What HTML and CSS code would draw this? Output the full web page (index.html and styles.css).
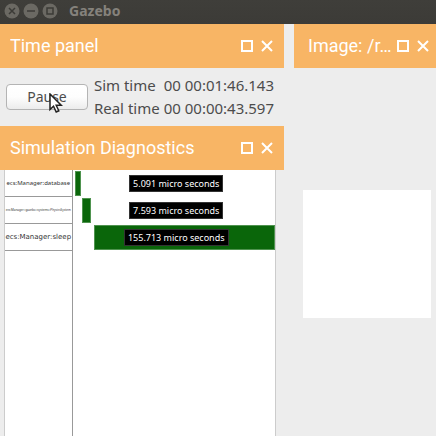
FILE: index.html
```html
<!DOCTYPE html>
<html lang="en">
<head>
<meta charset="utf-8">
<title>Gazebo</title>
<link rel="stylesheet" href="styles.css">
</head>
<body>
<header class="titlebar">
  <button class="window-button" aria-label="Close window"><svg viewBox="0 0 16 16"><circle cx="8" cy="8" r="7.5"/><path d="M5 5l6 6M11 5l-6 6"/></svg></button>
  <button class="window-button" aria-label="Minimize window"><svg viewBox="0 0 16 16"><circle cx="8" cy="8" r="7.5"/><path d="M4 8h8"/></svg></button>
  <button class="window-button" aria-label="Maximize window"><svg viewBox="0 0 16 16"><circle cx="8" cy="8" r="7.5"/><path d="M5 5h6v6H5z"/></svg></button>
  <h1 class="window-title">Gazebo</h1>
</header>
<main class="workspace">
  <div class="column">
    <section class="panel">
      <header class="panel-header">
        <h2 class="panel-title">Time panel</h2>
        <button class="panel-button" aria-label="Maximize"><svg viewBox="0 0 12 12"><path d="M1 1h10v10H1z"/></svg></button>
        <button class="panel-button" aria-label="Close"><svg viewBox="0 0 12 12"><path d="M1 1l10 10M11 1L1 11"/></svg></button>
      </header>
      <div class="time-body">
        <div class="pause-wrap">
          <button class="pause">Pause</button>
          <svg class="cursor" viewBox="0 0 14 20"><path d="M1 1v15.500l3.500-3.300 2.700 5.800 2.600-1.200-2.600-5.600h5z"/></svg>
        </div>
        <dl class="times">
          <dt>Sim time</dt><dd>00 00:01:46.143</dd>
          <dt>Real time</dt><dd>00 00:00:43.597</dd>
        </dl>
      </div>
    </section>
    <section class="panel panel-fill">
      <header class="panel-header">
        <h2 class="panel-title">Simulation Diagnostics</h2>
        <button class="panel-button" aria-label="Maximize"><svg viewBox="0 0 12 12"><path d="M1 1h10v10H1z"/></svg></button>
        <button class="panel-button" aria-label="Close"><svg viewBox="0 0 12 12"><path d="M1 1l10 10M11 1L1 11"/></svg></button>
      </header>
      <div class="chart">
        <div class="row">
          <div class="label label-medium">ecs:Manager:database</div>
          <div class="track"><div class="bar" style="margin-left:1%;width:3%"></div><span class="duration">5.091 micro seconds</span></div>
        </div>
        <div class="row">
          <div class="label label-small">ecs:Manager::gazebo::systems::PhysicsSystem</div>
          <div class="track"><div class="bar" style="margin-left:4.7%;width:4.5%"></div><span class="duration">7.593 micro seconds</span></div>
        </div>
        <div class="row">
          <div class="label label-large">ecs:Manager:sleep</div>
          <div class="track"><div class="bar" style="margin-left:10.4%;width:89.6%"></div><span class="duration">155.713 micro seconds</span></div>
        </div>
        <div class="row row-rest"><div class="label"></div></div>
      </div>
    </section>
  </div>
  <section class="panel">
    <header class="panel-header">
      <h2 class="panel-title">Image: /r…</h2>
      <button class="panel-button" aria-label="Maximize"><svg viewBox="0 0 12 12"><path d="M1 1h10v10H1z"/></svg></button>
      <button class="panel-button" aria-label="Close"><svg viewBox="0 0 12 12"><path d="M1 1l10 10M11 1L1 11"/></svg></button>
    </header>
    <div class="image-body"><div class="image-view"></div></div>
  </section>
</main>
</body>
</html>
```
FILE: styles.css
```css
* {
  box-sizing: border-box;
}

body {
  margin: 0;
  min-height: 100vh;
  display: flex;
  flex-direction: column;
  background: #ededed;
  color: #4c4c4c;
  font-family: "Noto Sans", "Open Sans", sans-serif;
}

h1, h2, dl, dd {
  margin: 0;
}

button {
  font: inherit;
  color: inherit;
}

svg {
  display: block;
  width: 100%;
  fill: none;
}

.titlebar {
  height: 24px;
  padding: 0 4px 2px;
  display: flex;
  align-items: center;
  gap: 3px;
  background: linear-gradient(#3f3e3a, #3c3b37);
}

.window-button {
  width: 16px;
  padding: 0;
  border: 0;
  background: none;
}

.window-button circle {
  fill: #6b6963;
}

.window-button path {
  stroke: #3c3b37;
  stroke-width: 1.5;
}

.window-title {
  padding-left: 8px;
  color: #85827c;
  font-size: 14px;
  line-height: 20px;
}

.workspace {
  flex: 1;
  display: grid;
  grid-template-columns: minmax(0, 2fr) minmax(0, 1fr);
  gap: 10px;
}

.column,
.panel {
  display: flex;
  flex-direction: column;
}

.panel-fill {
  flex: 1;
}

.panel-header {
  height: 44px;
  padding: 0 11px 0 10px;
  display: flex;
  align-items: center;
  gap: 8px;
  background: #f8b565;
  color: #fff;
}

.workspace > .panel > .panel-header {
  padding: 0 7px 0 14px;
}

.panel-title {
  flex: 1;
  min-width: 0;
  overflow: hidden;
  white-space: nowrap;
  font: 400 18px/24px Roboto, sans-serif;
}

.workspace > .panel .panel-title {
  margin-right: -8px;
}

.panel-button {
  width: 12px;
  flex: none;
  padding: 0;
  border: 0;
  background: none;
}

.panel-button path {
  stroke: #fff;
  stroke-width: 2;
}

.time-body {
  height: 58px;
  padding: 0 10px 0 6px;
  display: flex;
  align-items: center;
  gap: 6px;
}

.pause-wrap {
  position: relative;
  flex: 1;
}

.pause {
  display: block;
  width: 100%;
  height: 26px;
  padding: 0;
  border: 1px solid #b4b4b4;
  border-radius: 4px;
  background: linear-gradient(#fff, #fdfdfd 50%, #ececec);
  font-size: 14px;
  line-height: 24px;
}

.cursor {
  position: absolute;
  left: 43px;
  top: 9px;
  width: 14px;
}

.cursor path {
  fill: #fff;
  stroke: #222;
  stroke-width: 1.5;
}

.times {
  display: grid;
  grid-template-columns: auto auto;
  column-gap: 4px;
  font-size: 15px;
  line-height: 23px;
  white-space: nowrap;
}

.chart {
  flex: 1;
  margin: 0 8px 0 4px;
  display: flex;
  flex-direction: column;
  border: solid #ccc;
  border-width: 0 1px;
  background: #fff;
}

.row {
  height: 27px;
  display: grid;
  grid-template-columns: minmax(0, 1fr) minmax(0, 3fr);
}

.row-rest {
  flex: 1;
}

.label {
  display: flex;
  align-items: center;
  justify-content: center;
  border-right: 1px solid #999;
  border-bottom: 1px solid #999;
  color: #333;
  white-space: nowrap;
}

.row-rest .label {
  border-bottom: 0;
}

.label-small {
  font-size: 3px;
}

.label-medium {
  font-size: 6px;
}

.label-large {
  font-family: "DejaVu Sans", sans-serif;
  font-size: 7px;
}

.track {
  display: grid;
  align-items: center;
}

.bar,
.duration {
  grid-area: 1 / 1;
}

.bar {
  height: 25px;
  border: 1px solid #4f934f;
  background: #0a660a;
}

.duration {
  justify-self: center;
  margin-left: 5px;
  padding: 0 3px;
  border: 1px solid #333;
  background: #000;
  color: #fff;
  font-size: 9px;
  line-height: 15px;
}

.image-body {
  padding: 122px 5px 0 9px;
}

.image-view {
  aspect-ratio: 1;
  background: #fff;
}
```
